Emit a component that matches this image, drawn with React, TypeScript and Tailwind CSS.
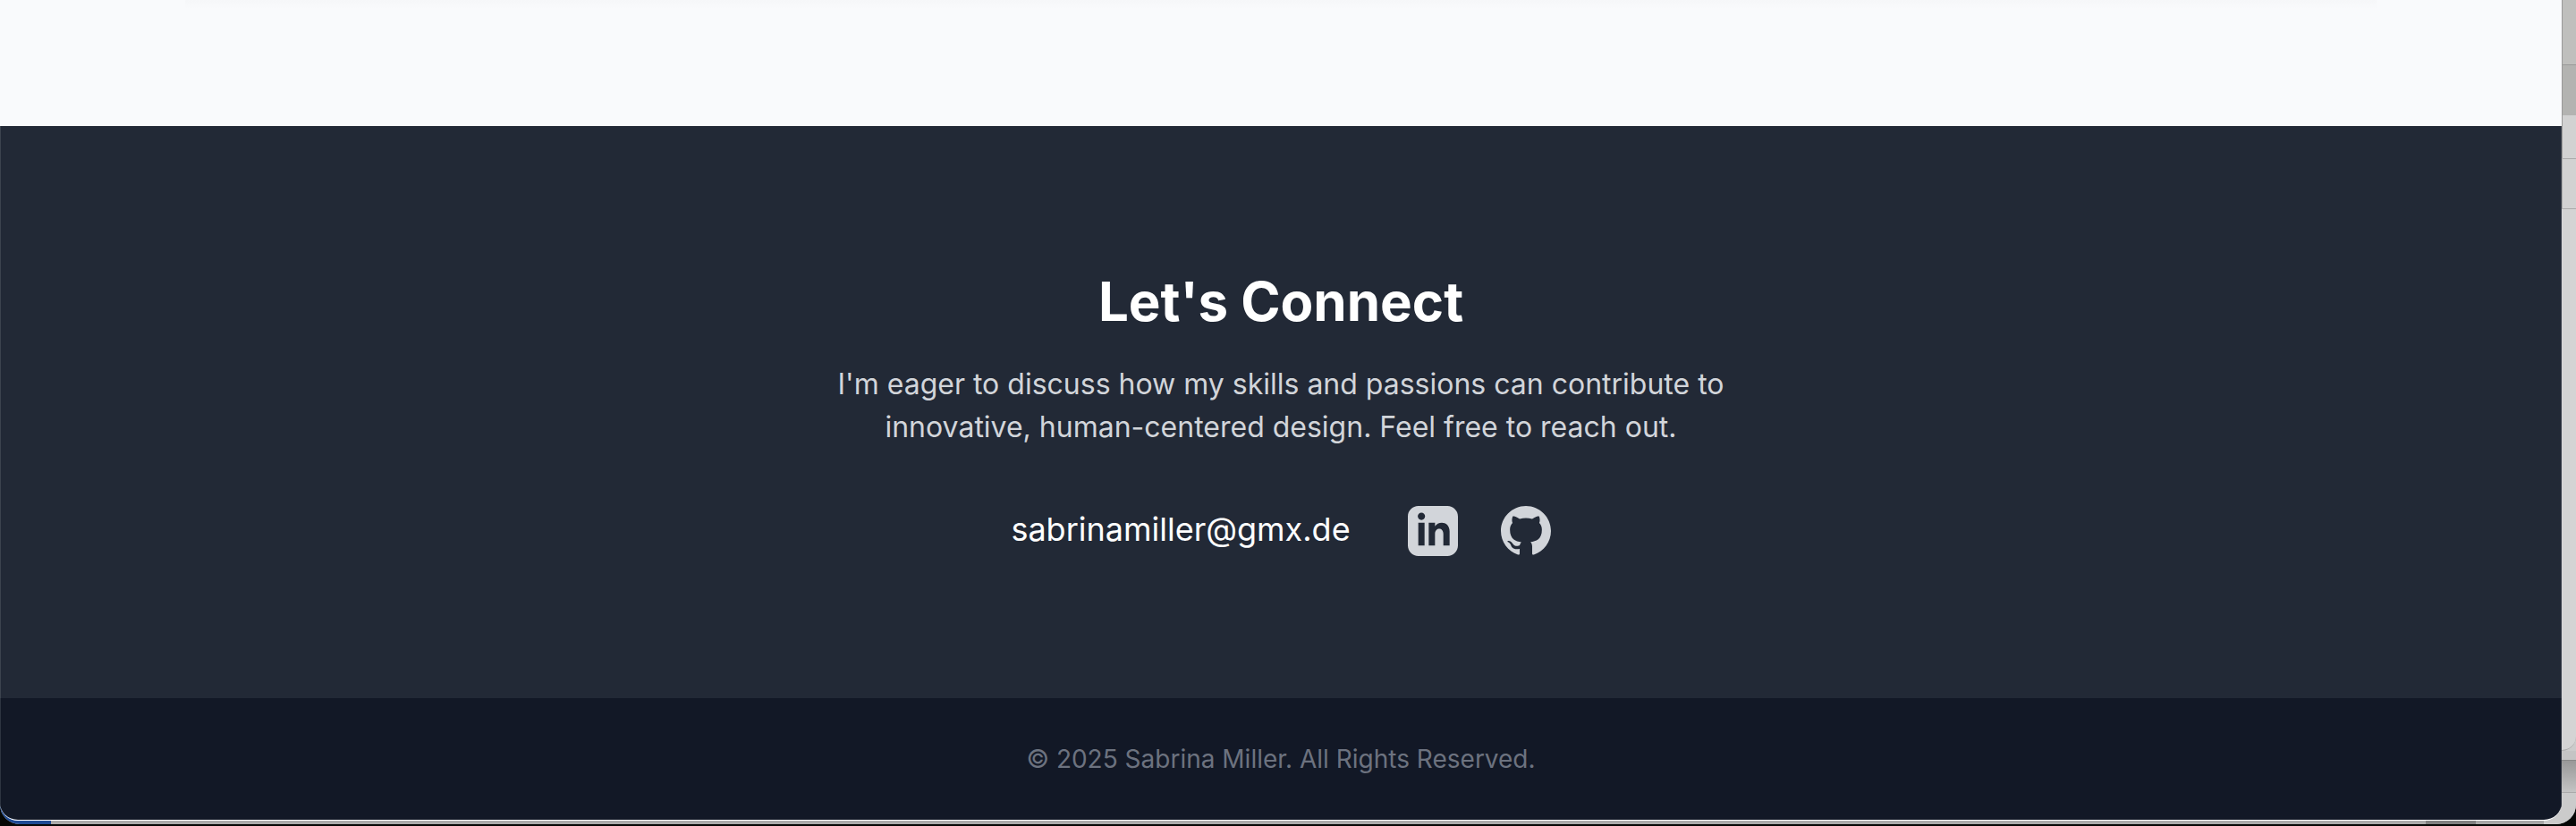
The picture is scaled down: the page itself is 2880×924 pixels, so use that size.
const LinkedIn = () => (
  <svg className="block size-14" viewBox="0 0 24 24" fill="currentColor">
    <path d="M19 0h-14c-2.761 0-5 2.239-5 5v14c0 2.761 2.239 5 5 5h14c2.762 0 5-2.239 5-5v-14c0-2.761-2.238-5-5-5zm-11 19h-3v-11h3v11zm-1.5-12.268c-.966 0-1.75-.79-1.75-1.764s.784-1.764 1.75-1.764 1.75.79 1.75 1.764-.783 1.764-1.75 1.764zm13.5 12.268h-3v-5.604c0-3.368-4-3.113-4 0v5.604h-3v-11h3v1.765c1.396-2.586 7-2.777 7 2.476v6.759z" />
  </svg>
);

const GitHub = () => (
  <svg className="block size-14" viewBox="0 0 24 24" fill="currentColor">
    <path d="M12 0c-6.626 0-12 5.373-12 12 0 5.302 3.438 9.8 8.207 11.387.599.111.793-.261.793-.577v-2.234c-3.338.726-4.033-1.416-4.033-1.416-.546-1.387-1.333-1.756-1.333-1.756-1.089-.745.083-.729.083-.729 1.205.084 1.839 1.237 1.839 1.237 1.07 1.834 2.807 1.304 3.492.997.107-.775.418-1.305.762-1.604-2.665-.305-5.467-1.334-5.467-5.931 0-1.311.469-2.381 1.236-3.221-.124-.303-.535-1.524.117-3.176 0 0 1.008-.322 3.301 1.23.957-.266 1.983-.399 3.003-.404 1.02.005 2.047.138 3.006.404 2.291-1.552 3.297-1.23 3.297-1.23.653 1.653.242 2.874.118 3.176.77.84 1.235 1.911 1.235 3.221 0 4.609-2.807 5.624-5.479 5.921.43.372.823 1.102.823 2.222v3.293c0 .319.192.694.801.576 4.765-1.589 8.199-6.086 8.199-11.386 0-6.627-5.373-12-12-12z" />
  </svg>
);

export default function App() {
  return (
    <div className="relative h-[924px] w-[2880px] overflow-hidden bg-[#050705] font-['Inter',sans-serif]">
      {/* windows behind the page */}
      <div className="flex h-[922px] flex-col items-end overflow-hidden rounded-b-[22px] bg-[#cbcbcb]">
        <div className="h-[72px] w-4 shrink-0 border-l border-[#999] bg-[#bfbfbd]" />
        <div className="h-[57px] w-4 shrink-0 border-t border-l border-[#999] bg-[#b3b3b1]" />
        <div className="h-12 w-4 shrink-0 border-l border-[#999] bg-[#d2d2d2]" />
        <div className="h-14 w-4 shrink-0 border-t border-l border-[#aaa] bg-[#d2d2d2]" />
        <div className="h-[607px] w-4 shrink-0 rounded-br-[16px] border-t border-b border-[#aaa] bg-[#d4d4d4]" />
        <div className="h-[10px] w-4 shrink-0 bg-[#c4c4c4]" />
        <div className="h-9 w-4 shrink-0 border-t border-[#888] bg-linear-to-b from-[#989898] to-[#c4c4c4]" />
        <div className="flex h-[36px] w-full shrink-0 items-end border-t border-[#aaa]">
          <div className="h-full w-[57px] bg-[#1d4a94]" />
          <div className="h-full w-[2655px] bg-[#aaa]" />
          <div className="h-full w-14 bg-[#808080]" />
          <div className="h-full w-[76px] bg-[#a6a6a6]" />
          <div className="h-full flex-1 bg-[#cbcbcb]" />
        </div>
      </div>

      {/* browser page */}
      <div className="absolute top-0 left-0 flex h-[918px] w-[2864px] flex-col overflow-hidden rounded-b-[20px] border-b border-white bg-[#f9fafc]">
        <div className="h-[141px] shrink-0">
          <div className="mx-auto h-[10px] w-[2450px] bg-linear-to-b from-[#f6f7f9] to-[#f9fafc]" />
        </div>
        <footer className="flex h-[640px] shrink-0 flex-col items-center border-x border-[#3c434e] bg-[#222936] pt-40">
          <h2 className="text-[60px] leading-[72px] font-bold text-white">Let's Connect</h2>
          <p className="mt-[33px] text-center text-[32px] leading-[48px] text-[#d2d5da]">
            I'm eager to discuss how my skills and passions can contribute to
            <br />
            innovative, human-centered design. Feel free to reach out.
          </p>
          <div className="mt-16 flex items-start gap-12 text-[#d2d5da]">
            <a className="mr-4 text-[36px] leading-[52px] text-white">sabrinamiller@gmx.de</a>
            <LinkedIn />
            <GitHub />
          </div>
        </footer>
        <div className="flex flex-1 justify-center border-x border-[#2d3440] bg-[#121826] pt-12">
          <p className="text-[28px] leading-10 text-[#6c727f]">© 2025 Sabrina Miller. All Rights Reserved.</p>
        </div>
      </div>
    </div>
  );
}
